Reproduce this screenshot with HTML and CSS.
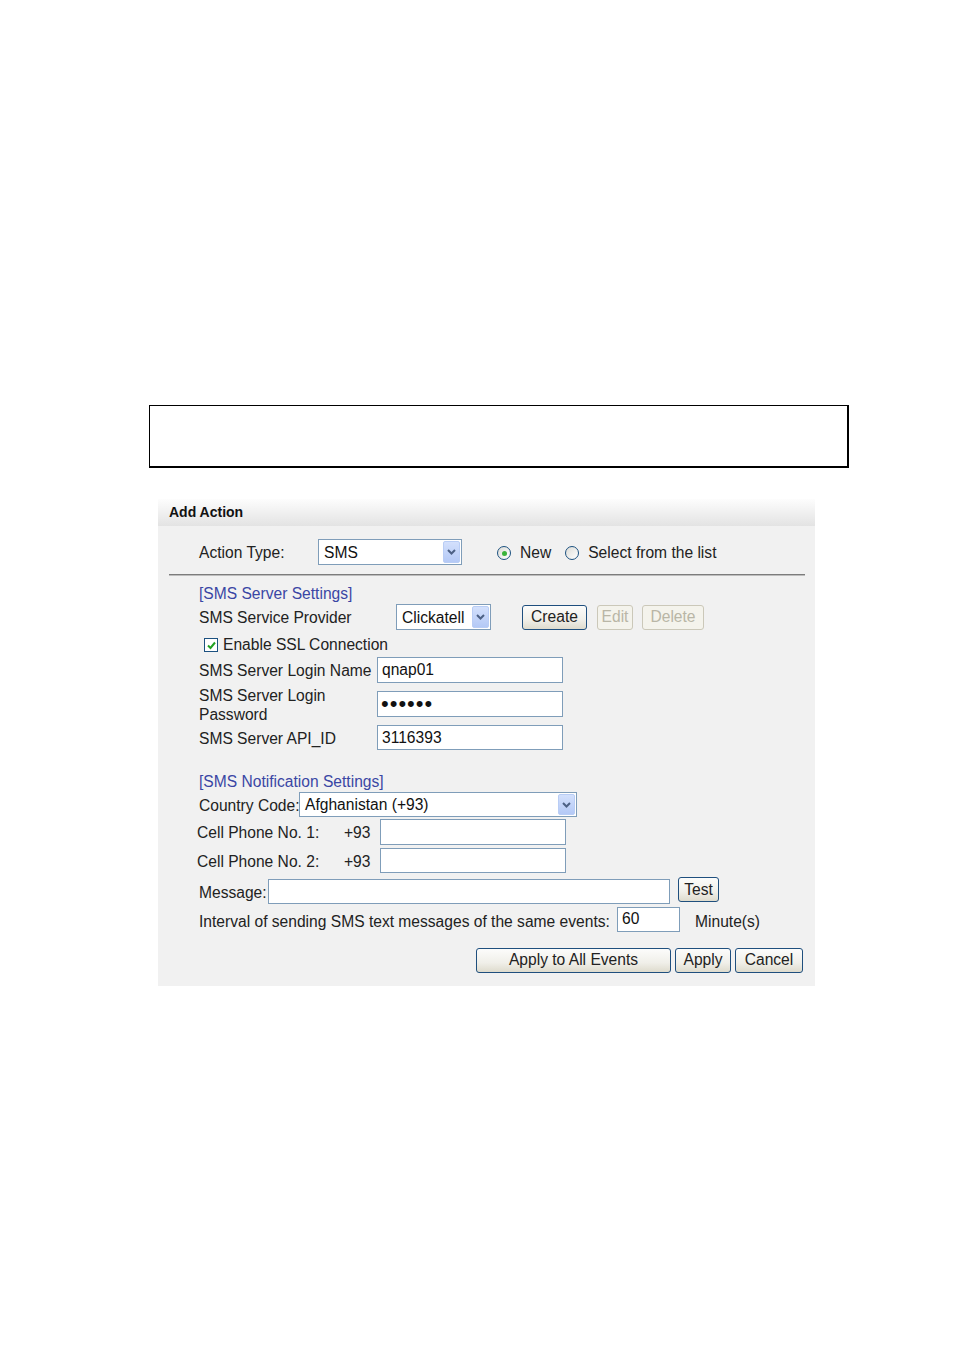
FILE: index.html
```html
<!DOCTYPE html>
<html lang="en">
<head>
  <meta charset="UTF-8" />
  <title>Add Action - SMS</title>
  <link rel="stylesheet" href="styles.css">
</head>
<body>
  <div class="page">
    <div class="frame"></div>

    <div class="panel">
      <div class="panel-head">Add Action</div>
      <div class="panel-body">

        <div class="row type-row">
          <span class="lbl lbl-type">Action Type:</span>
          <div class="combo w-type">
            <span class="combo-text">SMS</span>
            <span class="combo-arrow"><svg width="9" height="6" viewBox="0 0 9 6"><path d="M1 1l3.5 3.5L8 1" fill="none" stroke="#4d6185" stroke-width="2"/></svg></span>
          </div>
          <div class="radios">
            <span class="radio checked"></span><span class="radio-lbl">New</span>
            <span class="radio"></span><span class="radio-lbl">Select from the list</span>
          </div>
        </div>

        <div class="rule"></div>

        <div class="heading">[SMS Server Settings]</div>

        <div class="row">
          <span class="lbl lbl-provider">SMS Service Provider</span>
          <div class="combo w-provider">
            <span class="combo-text">Clickatell</span>
            <span class="combo-arrow"><svg width="9" height="6" viewBox="0 0 9 6"><path d="M1 1l3.5 3.5L8 1" fill="none" stroke="#4d6185" stroke-width="2"/></svg></span>
          </div>
          <button class="btn btn-create">Create</button>
          <button class="btn btn-edit" disabled>Edit</button>
          <button class="btn btn-delete" disabled>Delete</button>
        </div>

        <div class="row check-row">
          <span class="check"><svg width="11" height="11" viewBox="0 0 11 11"><path d="M2 5.5l2.5 2.5L9 2.5" fill="none" stroke="#21a121" stroke-width="2"/></svg></span>
          <span class="lbl">Enable SSL Connection</span>
        </div>

        <div class="row login-row">
          <span class="lbl lbl-login">SMS Server Login Name</span>
          <input class="field w-login" type="text" value="qnap01">
        </div>

        <div class="row pass-row">
          <span class="lbl lbl-login two-line">SMS Server Login<br>Password</span>
          <input class="field w-login pass" type="password" value="qnap01">
        </div>

        <div class="row api-row">
          <span class="lbl lbl-login">SMS Server API_ID</span>
          <input class="field w-login" type="text" value="3116393">
        </div>

        <div class="heading notify">[SMS Notification Settings]</div>

        <div class="row country-row">
          <span class="lbl lbl-country">Country Code:</span>
          <div class="combo w-country">
            <span class="combo-text">Afghanistan (+93)</span>
            <span class="combo-arrow"><svg width="9" height="6" viewBox="0 0 9 6"><path d="M1 1l3.5 3.5L8 1" fill="none" stroke="#4d6185" stroke-width="2"/></svg></span>
          </div>
        </div>

        <div class="row phone-row">
          <span class="lbl lbl-phone">Cell Phone No. 1:</span>
          <span class="prefix">+93</span>
          <input class="field w-phone" type="text">
        </div>

        <div class="row phone-row second">
          <span class="lbl lbl-phone">Cell Phone No. 2:</span>
          <span class="prefix">+93</span>
          <input class="field w-phone" type="text">
        </div>

        <div class="row message-row">
          <span class="lbl lbl-message low">Message:</span>
          <input class="field w-message" type="text">
          <button class="btn btn-test">Test</button>
        </div>

        <div class="row interval-row">
          <span class="lbl lbl-interval low">Interval of sending SMS text messages of the same events:</span>
          <input class="field w-interval" type="text" value="60">
          <span class="unit low">Minute(s)</span>
        </div>

        <div class="row actions">
          <button class="btn btn-all">Apply to All Events</button>
          <button class="btn btn-apply">Apply</button>
          <button class="btn btn-cancel">Cancel</button>
        </div>

      </div>
    </div>
  </div>
</body>
</html>
```

FILE: styles.css
```css
body {
  margin: 0;
  background: #fff;
  font-family: "Liberation Sans", Arial, sans-serif;
  font-size: 15.6px;
  color: #222;
}
.page {
  padding-top: 405px;
  padding-bottom: 365px;
}
.frame {
  margin-left: 149px;
  width: 700px;
  height: 63px;
  box-sizing: border-box;
  border-top: 1px solid #000;
  border-left: 1px solid #000;
  border-right: 2px solid #000;
  border-bottom: 2px solid #000;
}
.panel {
  margin: 31px 0 0 158px;
  width: 657px;
  background: #f1f1f1;
}
.panel-head {
  height: 27px;
  line-height: 27px;
  padding-left: 11px;
  font-size: 14px;
  font-weight: bold;
  color: #111;
  background: linear-gradient(#fdfdfd, #e3e3e3);
}
.panel-body {
  padding: 13px 10px 13px 11px;
}
.row {
  display: flex;
  align-items: center;
  height: 26px;
  padding-left: 30px;
}
.lbl, .radio-lbl, .prefix {
  flex: none;
  white-space: nowrap;
  padding-top: 2px;
}
.low { padding-top: 5px; }
.lbl-type { width: 119px; }
.lbl-provider { width: 197px; }
.lbl-login { width: 178px; }
.lbl-country { width: 100px; }
.lbl-phone { width: 147px; margin-left: -2px; }
.lbl-message { width: 69px; }
.lbl-interval { width: 418px; }
.two-line { line-height: 19px; padding-top: 1px; }

/* fake drop-down */
.combo {
  display: flex;
  align-items: stretch;
  height: 26px;
  box-sizing: border-box;
  border: 1px solid #7f9db9;
  background: #fff;
}
.combo-text {
  flex: 1;
  padding: 1px 0 0 5px;
  line-height: 24px;
  white-space: nowrap;
  color: #111;
}
.combo-arrow {
  width: 17px;
  margin: 1px;
  box-sizing: border-box;
  border: 1px solid #b9cdf5;
  border-radius: 2px;
  background: linear-gradient(#d3e0fc, #b4c9f6);
  display: flex;
  align-items: center;
  justify-content: center;
}
.w-type { width: 144px; }
.w-provider { width: 95px; }
.w-country { width: 278px; height: 25px; }
.w-country .combo-text { line-height: 23px; padding-top: 0; }

/* radios and checkbox */
.radios {
  display: flex;
  align-items: center;
  margin-left: 35px;
  padding-top: 2px;
}
.radio {
  width: 14px;
  height: 14px;
  box-sizing: border-box;
  border: 1px solid #1c5180;
  border-radius: 50%;
  background: linear-gradient(135deg, #dcdcd7, #fff);
  display: flex;
  align-items: center;
  justify-content: center;
}
.radio.checked::after {
  content: "";
  width: 5px;
  height: 5px;
  border-radius: 50%;
  background: #3ab33a;
}
.radio-lbl {
  margin: 0 14px 0 9px;
  padding-top: 0;
}
.rule {
  margin-top: 9px;
  border-top: 1px solid #7c7c7c;
  border-bottom: 1px solid #bdbdbd;
}
.heading {
  margin-top: 9px;
  padding-left: 30px;
  line-height: 18px;
  height: 18px;
  color: #3a46a4;
}
.heading + .row { margin-top: 1px; }
.check-row {
  margin-top: 4px;
  height: 20px;
  padding-left: 35px;
}
.check {
  width: 14px;
  height: 14px;
  box-sizing: border-box;
  border: 1px solid #1c5180;
  background: #fff;
  margin: 2px 5px 0 0;
  display: flex;
  align-items: center;
  justify-content: center;
}
.login-row { margin-top: 3px; }
.pass-row { margin-top: 2px; height: 38px; }
.api-row { margin-top: 2px; height: 25px; }
.heading.notify { margin-top: 23px; }
.country-row { height: 25px; }
.phone-row { margin-top: 2px; }
.phone-row.second { margin-top: 3px; height: 25px; }
.message-row { margin-top: 4px; }
.interval-row { margin-top: 4px; height: 25px; }

/* text inputs */
.field {
  box-sizing: border-box;
  height: 26px;
  margin: 0;
  padding: 0 4px;
  border: 1px solid #7f9db9;
  background: #fff;
  font-family: "Liberation Sans", Arial, sans-serif;
  font-size: 15.6px;
  color: #111;
  outline: none;
}
.w-login { width: 186px; }
.pass { font-size: 22px; letter-spacing: 1px; padding-left: 3px; }
.api-row .field { height: 25px; }
.prefix { width: 36px; }
.w-phone { width: 186px; }
.phone-row.second .field { height: 25px; }
.w-message { width: 402px; margin-top: 2px; height: 25px; }
.w-interval { width: 63px; height: 25px; padding-bottom: 2px; }
.unit { margin-left: 15px; }

/* XP style buttons */
.btn {
  height: 25px;
  box-sizing: border-box;
  padding: 0;
  border: 1px solid #1f4f7e;
  border-radius: 3px;
  background: linear-gradient(#fcfcfb, #f0efe9 60%, #dedbcd);
  font-family: "Liberation Sans", Arial, sans-serif;
  font-size: 15.6px;
  color: #222;
  cursor: pointer;
}
.btn:disabled {
  border-color: #cbc8b9;
  background: #f4f3ec;
  color: #b9b6a6;
  cursor: default;
}
.btn-create { width: 65px; margin-left: 31px; }
.btn-edit { width: 36px; margin-left: 10px; }
.btn-delete { width: 62px; margin-left: 9px; }
.btn-test { width: 41px; margin-left: 8px; margin-top: -1px; }
.actions {
  margin-top: 15px;
  justify-content: flex-end;
  padding-right: 2px;
}
.btn-all { width: 195px; }
.btn-apply { width: 56px; margin-left: 4px; }
.btn-cancel { width: 68px; margin-left: 4px; }
```
